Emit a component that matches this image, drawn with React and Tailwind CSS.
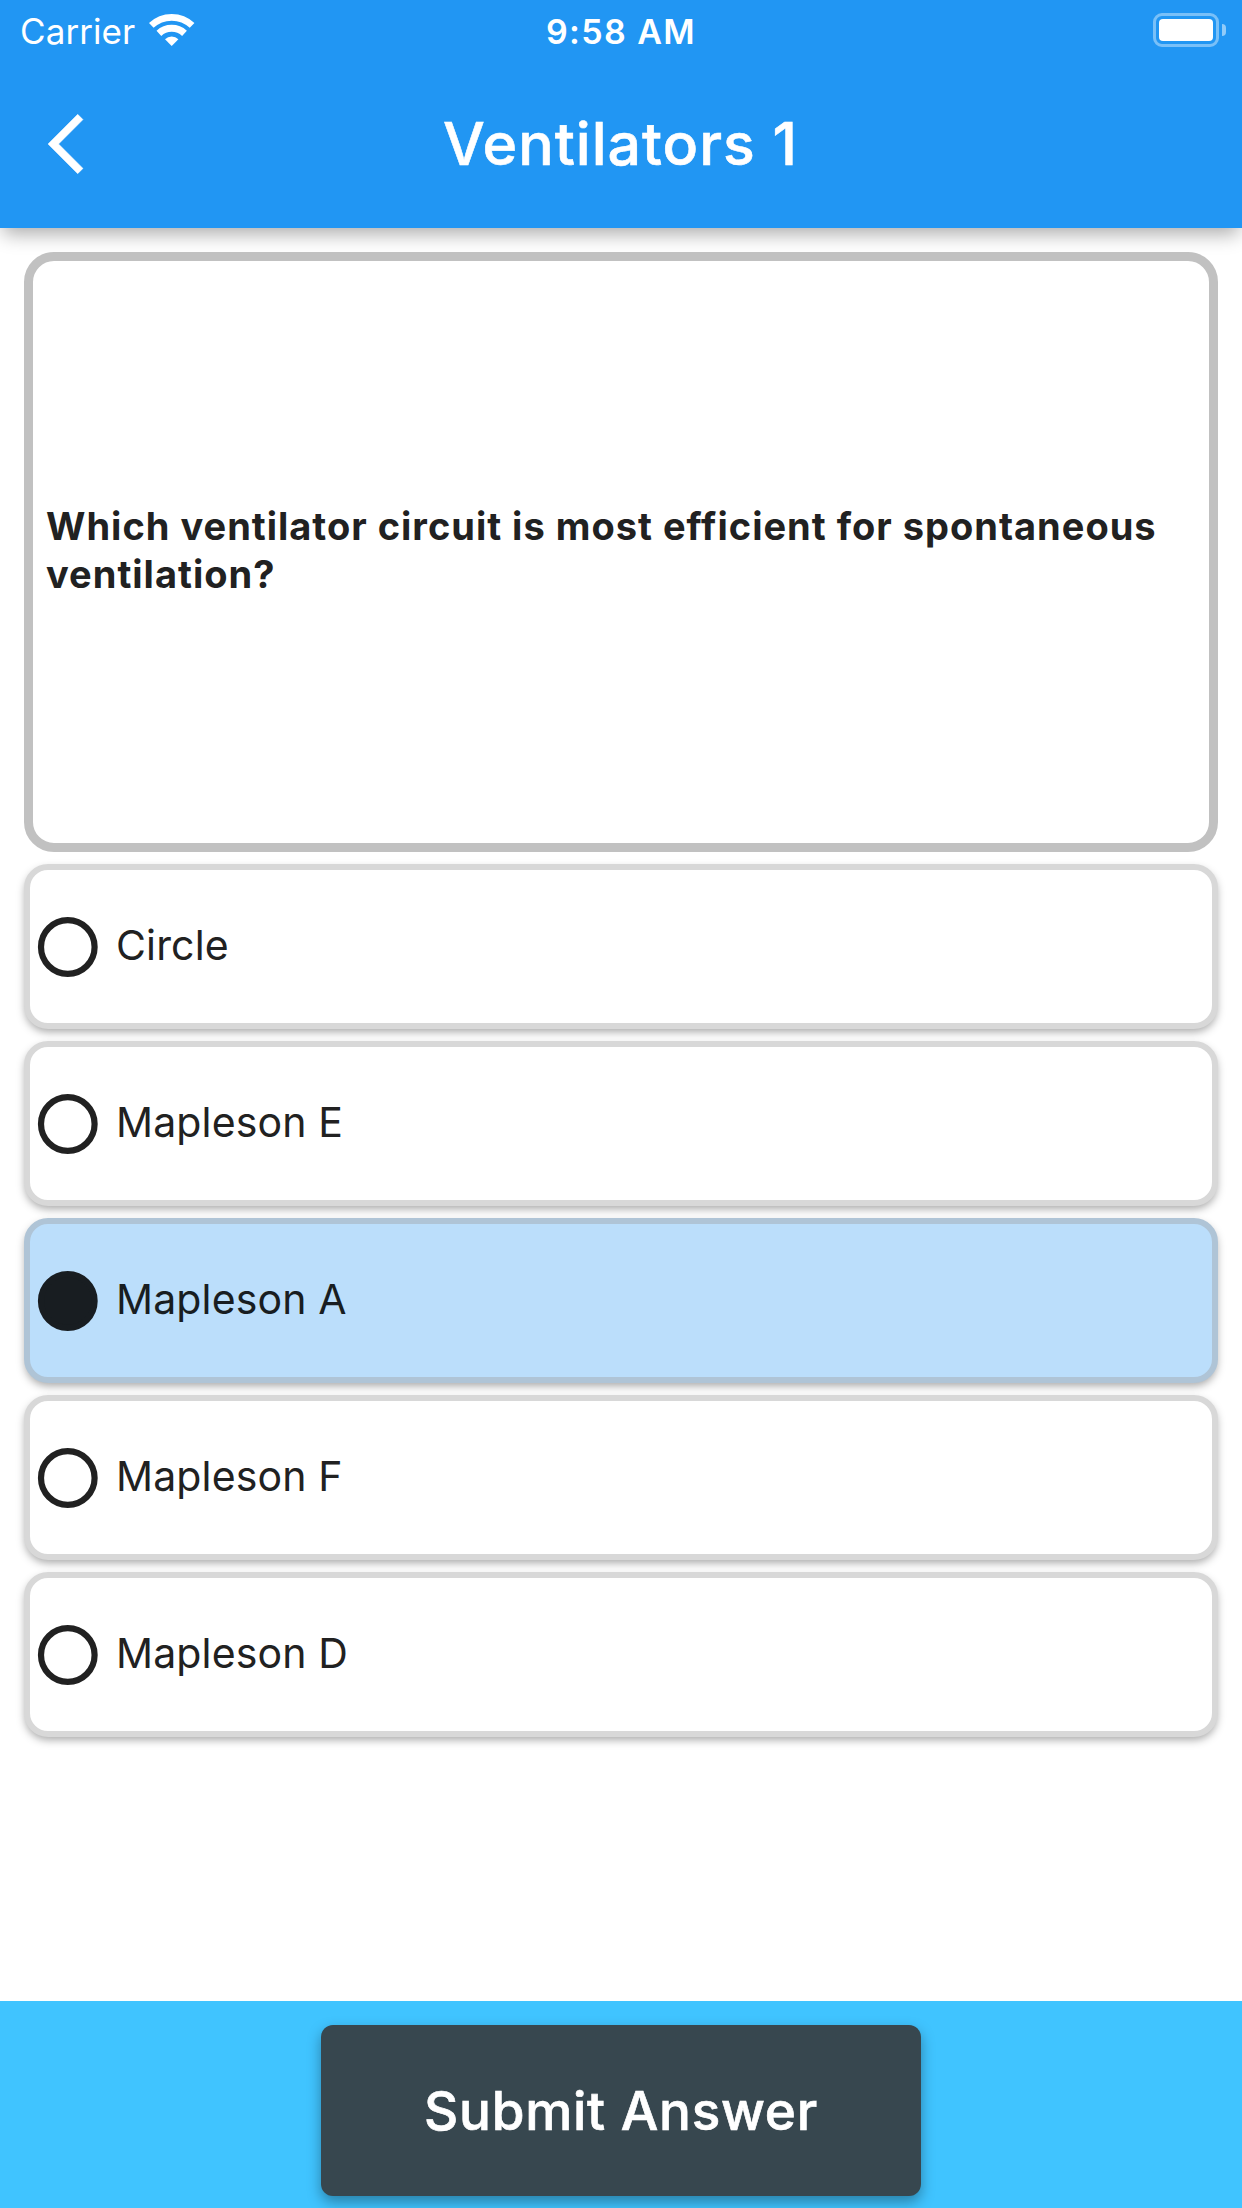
const options = [
  { label: "Circle" },
  { label: "Mapleson E" },
  { label: "Mapleson A", selected: true },
  { label: "Mapleson F" },
  { label: "Mapleson D" },
];

function WifiIcon() {
  return (
    <svg className="mt-[13px] ml-[14px] h-[33px] w-[46px]" viewBox="0 0 46 33" fill="none">
      <path d="M2.3 12.4A29.7 29.7 0 0 1 43.1 12.4" stroke="#fff" strokeWidth="6.8" />
      <path d="M9.9 20.4A18.8 18.8 0 0 1 35.5 20.4" stroke="#fff" strokeWidth="7" />
      <path d="M22.7 33L16 26.3A9.6 9.6 0 0 1 29.4 26.3Z" fill="#fff" />
    </svg>
  );
}

function Battery() {
  return (
    <div className="mt-[13px] mr-4 flex items-center gap-[3px]">
      <div className="h-[34px] w-[66px] rounded-[9px] border-[3px] border-white/40 p-[3px]">
        <div className="h-full w-full rounded-[4px] bg-white" />
      </div>
      <div className="h-3 w-1 rounded-r-full bg-white/50" />
    </div>
  );
}

function StatusBar() {
  return (
    <div className="grid h-[60px] grid-cols-3 items-start whitespace-nowrap">
      <div className="flex items-start pl-5">
        <span className="mt-[10px] text-[35px] leading-[42px] tracking-[0.08px]">Carrier</span>
        <WifiIcon />
      </div>
      <div className="mt-[11px] text-center text-[34px] leading-[41px] font-semibold tracking-[1.38px]">9:58 AM</div>
      <div className="flex justify-end">
        <Battery />
      </div>
    </div>
  );
}

function NavBar() {
  return (
    <div className="flex h-[168px] items-center px-12">
      <button className="h-[72px] w-[72px]" aria-label="Back">
        <svg className="h-[72px] w-[72px]" viewBox="0 0 24 24" fill="#fff">
          <path d="M11.67 3.87L9.9 2.1 0 12l9.9 9.9 1.77-1.77L3.54 12z" stroke="#fff" strokeWidth="0.15" />
        </svg>
      </button>
      <h1 className="flex-1 text-center text-[59px] leading-[70px] font-medium tracking-[1px] [-webkit-text-stroke:0.6px_white]">
        Ventilators 1
      </h1>
      <div className="w-[73px]" />
    </div>
  );
}

function Option({ label, selected }) {
  return (
    <div
      className={
        "flex h-[165px] items-center rounded-[24px] border-[6px] pl-[1.5px] shadow-[0_4px_8px_-1px_rgba(0,0,0,0.34)] " +
        (selected ? "border-[#afc4d6] bg-[#bbdefb] text-[#181d21]" : "border-[#d8d8d8] bg-white text-[#212121]")
      }
    >
      <svg className="h-[72px] w-[72px]" viewBox="0 0 72 72">
        <circle cx="35.8" cy="36" r="26.8" fill={selected ? "currentColor" : "none"} stroke="currentColor" strokeWidth="6.2" />
      </svg>
      <span className="pb-[3px] pl-[12.5px] text-[41px] leading-[50px] tracking-[0.15px]">{label}</span>
    </div>
  );
}

export default function App() {
  return (
    <div className="flex h-[2208px] w-[1242px] flex-col overflow-hidden bg-white font-['Inter',sans-serif]">
      <header className="h-[228px] bg-[#2196f3] text-white shadow-[0_9px_18px_-3px_rgba(0,0,0,0.33)]">
        <StatusBar />
        <NavBar />
      </header>

      <main className="flex flex-1 flex-col gap-3 px-6 pt-6">
        <section className="flex h-[600px] items-center rounded-[30px] border-[9px] border-[#c1c1c1] bg-white pb-[4px] pl-[13px]">
          <p className="text-[38px] leading-[48px] font-bold tracking-[1px] text-[#212121]">
            Which ventilator circuit is most efficient for spontaneous ventilation?
          </p>
        </section>
        {options.map((o) => (
          <Option key={o.label} {...o} />
        ))}
      </main>

      <footer className="flex h-[207px] justify-center bg-[#40c4ff] pt-6">
        <button className="h-[171px] w-[600px] rounded-[12px] bg-[#37474f] text-[53px] leading-[64px] font-medium tracking-[0.74px] text-white shadow-[0_6px_14px_0_rgba(0,0,0,0.35)] [-webkit-text-stroke:0.7px_white]">
          Submit Answer
        </button>
      </footer>
    </div>
  );
}
